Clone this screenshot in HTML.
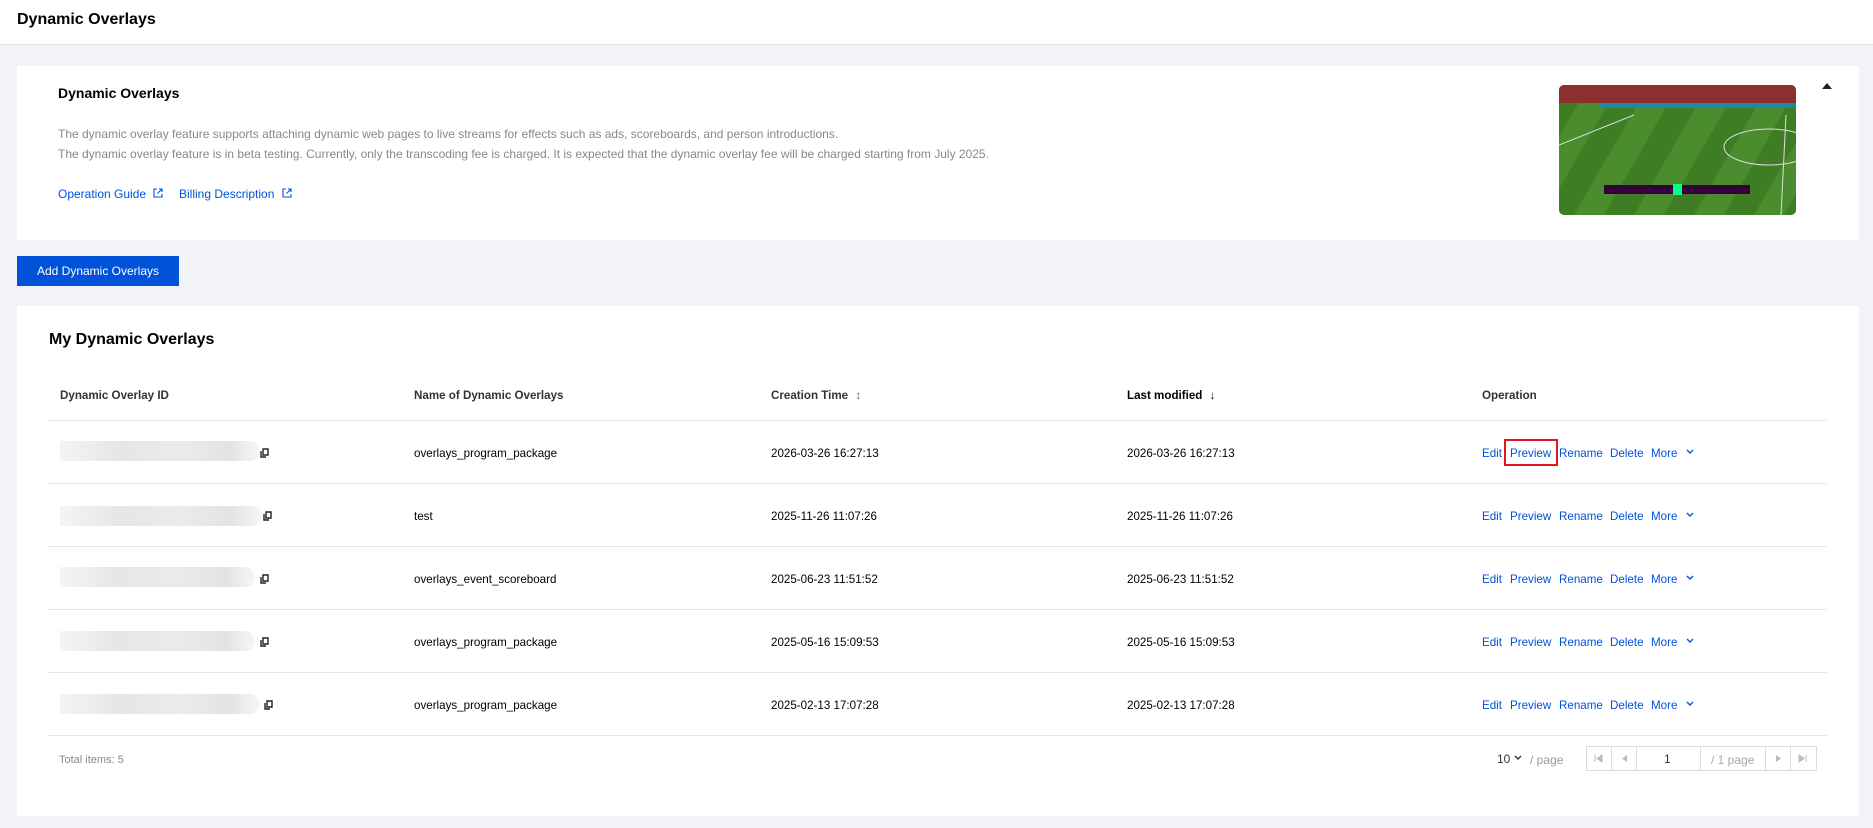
<!DOCTYPE html>
<html><head><meta charset="utf-8"><style>
*{margin:0;padding:0;box-sizing:border-box}
body{width:1873px;height:828px;background:#f2f3f7;font-family:"Liberation Sans",Arial,sans-serif;position:relative;overflow:hidden;color:#000}
.abs{position:absolute;white-space:nowrap}
.hdr{position:absolute;left:0;top:0;width:1873px;height:45px;background:#fff;border-bottom:1px solid #e5e6ea}
.card{position:absolute;background:#fff}
.t12{font-size:12px;line-height:14px}
.tb{font-size:11.6px;line-height:14px}
.gray{color:#888}
a{color:#0052d9}
.line{position:absolute;left:48px;width:1779px;height:1px;background:#e7e8ed}
.blur{position:absolute;height:20px;background:linear-gradient(90deg,#f4f4f4,#e6e6e6 30%,#ebebeb 60%,#e3e3e3 85%,#f6f6f6);border-radius:0 10px 10px 0}
</style></head><body>
<div class="hdr"><div class="abs" style="left:17px;top:11px;font-size:16px;font-weight:bold">Dynamic Overlays</div></div>

<div class="card" style="left:17px;top:66px;width:1842px;height:174px"></div>
<div class="abs" style="left:58px;top:85px;font-size:14px;font-weight:bold">Dynamic Overlays</div>
<div class="abs t12 gray" style="left:58px;top:127px">The dynamic overlay feature supports attaching dynamic web pages to live streams for effects such as ads, scoreboards, and person introductions.</div>
<div class="abs t12 gray" style="left:58px;top:147px">The dynamic overlay feature is in beta testing. Currently, only the transcoding fee is charged. It is expected that the dynamic overlay fee will be charged starting from July 2025.</div>
<div class="abs t12" style="left:58px;top:187px"><a>Operation Guide</a> <svg width="10" height="10" viewBox="0 0 10 10" style="margin-left:4px"><path d="M4 1H1v8h8V6M6 1h3v3M9 1L4.5 5.5" stroke="#0052d9" fill="none" stroke-width="1.1"/></svg></div>
<div class="abs t12" style="left:179px;top:187px"><a>Billing Description</a> <svg width="10" height="10" viewBox="0 0 10 10" style="margin-left:4px"><path d="M4 1H1v8h8V6M6 1h3v3M9 1L4.5 5.5" stroke="#0052d9" fill="none" stroke-width="1.1"/></svg></div>
<svg class="abs" style="left:1559px;top:85px" width="237" height="130" viewBox="0 0 237 130">
<defs><clipPath id="c"><rect width="237" height="130" rx="5"/></clipPath>
<pattern id="s" width="60" height="130" patternUnits="userSpaceOnUse" patternTransform="skewX(-30)"><rect width="30" height="130" fill="#3f7d25"/><rect x="30" width="30" height="130" fill="#4a8c2e"/></pattern></defs>
<g clip-path="url(#c)"><rect width="237" height="130" fill="url(#s)"/><rect width="237" height="18" fill="#8a3030"/><rect y="18" x="40" width="197" height="5" fill="#1b8ba3"/>
<path d="M0 60L75 30M227 30L222 130" stroke="#ddd" stroke-width="1" fill="none"/><ellipse cx="210" cy="62" rx="45" ry="18" stroke="#ddd" fill="none"/>
<rect x="45" y="100" width="146" height="9" fill="#37003c"/><rect x="114" y="99" width="9" height="11" fill="#00ff85"/></g></svg>
<svg class="abs" style="left:1822px;top:82px" width="10" height="8"><path d="M0 7L5 1L10 7Z" fill="#222"/></svg>

<div class="abs" style="left:17px;top:256px;width:162px;height:30px;background:#0052d9;color:#fff;font-size:12px;line-height:30px;text-align:center">Add Dynamic Overlays</div>

<div class="card" style="left:17px;top:306px;width:1842px;height:510px"></div>
<div class="abs" style="left:49px;top:331px;font-size:16px;font-weight:bold">My Dynamic Overlays</div>
<div class="abs tb" style="left:60px;top:389px;color:#333;font-weight:bold">Dynamic Overlay ID</div>
<div class="abs tb" style="left:414px;top:389px;color:#333;font-weight:bold">Name of Dynamic Overlays</div>
<div class="abs tb" style="left:771px;top:389px;color:#333;font-weight:bold">Creation Time <span style="margin-left:4px;color:#666">↕</span></div>
<div class="abs tb" style="left:1127px;top:389px;font-weight:bold">Last modified <span style="margin-left:4px">↓</span></div>
<div class="abs tb" style="left:1482px;top:389px;color:#333;font-weight:bold">Operation</div>
<div class="line" style="top:420px"></div><div class="line" style="top:483px"></div><div class="line" style="top:546px"></div><div class="line" style="top:609px"></div><div class="line" style="top:672px"></div><div class="line" style="top:735px"></div>

<div class="blur" style="left:60px;top:441px;width:200px"></div>
<div class="blur" style="left:60px;top:506px;width:202px"></div>
<div class="blur" style="left:60px;top:567px;width:195px"></div>
<div class="blur" style="left:60px;top:631px;width:195px"></div>
<div class="blur" style="left:60px;top:694px;width:200px"></div>
<svg class="abs" style="left:260px;top:448px" width="9" height="10"><path d="M1 3v6h5M3 1h5v6H3z" stroke="#222" fill="none" stroke-width="1.4"/></svg>
<svg class="abs" style="left:263px;top:511px" width="9" height="10"><path d="M1 3v6h5M3 1h5v6H3z" stroke="#222" fill="none" stroke-width="1.4"/></svg>
<svg class="abs" style="left:260px;top:574px" width="9" height="10"><path d="M1 3v6h5M3 1h5v6H3z" stroke="#222" fill="none" stroke-width="1.4"/></svg>
<svg class="abs" style="left:260px;top:637px" width="9" height="10"><path d="M1 3v6h5M3 1h5v6H3z" stroke="#222" fill="none" stroke-width="1.4"/></svg>
<svg class="abs" style="left:264px;top:700px" width="9" height="10"><path d="M1 3v6h5M3 1h5v6H3z" stroke="#222" fill="none" stroke-width="1.4"/></svg>

<div class="abs tb" style="left:414px;top:447px">overlays_program_package</div>
<div class="abs tb" style="left:414px;top:510px">test</div>
<div class="abs tb" style="left:414px;top:573px">overlays_event_scoreboard</div>
<div class="abs tb" style="left:414px;top:636px">overlays_program_package</div>
<div class="abs tb" style="left:414px;top:699px">overlays_program_package</div>

<div class="abs tb" style="left:771px;top:447px">2026-03-26 16:27:13</div><div class="abs tb" style="left:1127px;top:447px">2026-03-26 16:27:13</div>
<div class="abs tb" style="left:771px;top:510px">2025-11-26 11:07:26</div><div class="abs tb" style="left:1127px;top:510px">2025-11-26 11:07:26</div>
<div class="abs tb" style="left:771px;top:573px">2025-06-23 11:51:52</div><div class="abs tb" style="left:1127px;top:573px">2025-06-23 11:51:52</div>
<div class="abs tb" style="left:771px;top:636px">2025-05-16 15:09:53</div><div class="abs tb" style="left:1127px;top:636px">2025-05-16 15:09:53</div>
<div class="abs tb" style="left:771px;top:699px">2025-02-13 17:07:28</div><div class="abs tb" style="left:1127px;top:699px">2025-02-13 17:07:28</div>

<div class="abs tb" style="left:1482px;top:447px;color:#0052d9"><span style="position:absolute;left:0">Edit</span><span style="position:absolute;left:28px">Preview</span><span style="position:absolute;left:77px">Rename</span><span style="position:absolute;left:128px">Delete</span><span style="position:absolute;left:169px">More</span></div>
<div class="abs" style="left:1504px;top:439px;width:54px;height:27px;border:2px solid #e0161d"></div>
<div class="abs tb" style="left:1482px;top:510px;color:#0052d9"><span style="position:absolute;left:0">Edit</span><span style="position:absolute;left:28px">Preview</span><span style="position:absolute;left:77px">Rename</span><span style="position:absolute;left:128px">Delete</span><span style="position:absolute;left:169px">More</span></div>
<div class="abs tb" style="left:1482px;top:573px;color:#0052d9"><span style="position:absolute;left:0">Edit</span><span style="position:absolute;left:28px">Preview</span><span style="position:absolute;left:77px">Rename</span><span style="position:absolute;left:128px">Delete</span><span style="position:absolute;left:169px">More</span></div>
<div class="abs tb" style="left:1482px;top:636px;color:#0052d9"><span style="position:absolute;left:0">Edit</span><span style="position:absolute;left:28px">Preview</span><span style="position:absolute;left:77px">Rename</span><span style="position:absolute;left:128px">Delete</span><span style="position:absolute;left:169px">More</span></div>
<div class="abs tb" style="left:1482px;top:699px;color:#0052d9"><span style="position:absolute;left:0">Edit</span><span style="position:absolute;left:28px">Preview</span><span style="position:absolute;left:77px">Rename</span><span style="position:absolute;left:128px">Delete</span><span style="position:absolute;left:169px">More</span></div>
<svg class="abs" style="left:1686px;top:449px" width="8" height="6"><path d="M1 1l3 3 3-3" stroke="#0052d9" fill="none" stroke-width="1.4"/></svg>
<svg class="abs" style="left:1686px;top:512px" width="8" height="6"><path d="M1 1l3 3 3-3" stroke="#0052d9" fill="none" stroke-width="1.4"/></svg>
<svg class="abs" style="left:1686px;top:575px" width="8" height="6"><path d="M1 1l3 3 3-3" stroke="#0052d9" fill="none" stroke-width="1.4"/></svg>
<svg class="abs" style="left:1686px;top:638px" width="8" height="6"><path d="M1 1l3 3 3-3" stroke="#0052d9" fill="none" stroke-width="1.4"/></svg>
<svg class="abs" style="left:1686px;top:701px" width="8" height="6"><path d="M1 1l3 3 3-3" stroke="#0052d9" fill="none" stroke-width="1.4"/></svg>

<div class="abs t12" style="left:59px;top:753px;color:#888;font-size:11px">Total items: 5</div>
<div class="abs t12" style="left:1497px;top:752px;color:#333">10</div>
<svg class="abs" style="left:1514px;top:755px" width="8" height="6"><path d="M1 1l3 3 3-3" stroke="#333" fill="none" stroke-width="1.4"/></svg>
<div class="abs t12" style="left:1530px;top:753px;color:#999">/ page</div>
<div class="abs" style="left:1586px;top:746px;width:231px;height:25px;border:1px solid #dcdcdc"></div>
<div class="abs" style="left:1611px;top:747px;width:1px;height:23px;background:#dcdcdc"></div>
<div class="abs" style="left:1636px;top:747px;width:1px;height:23px;background:#dcdcdc"></div>
<div class="abs" style="left:1700px;top:747px;width:1px;height:23px;background:#dcdcdc"></div>
<div class="abs" style="left:1765px;top:747px;width:1px;height:23px;background:#dcdcdc"></div>
<div class="abs" style="left:1790px;top:747px;width:1px;height:23px;background:#dcdcdc"></div>
<svg class="abs" style="left:1594px;top:754px" width="9" height="9"><path d="M1 1v7M8 1L3 4.5 8 8z" stroke="#bbb" fill="#bbb"/></svg>
<svg class="abs" style="left:1620px;top:754px" width="9" height="9"><path d="M7 1L2 4.5 7 8z" fill="#bbb"/></svg>
<div class="abs t12" style="left:1664px;top:752px;color:#333">1</div>
<div class="abs t12" style="left:1711px;top:753px;color:#aaa">/ 1 page</div>
<svg class="abs" style="left:1774px;top:754px" width="9" height="9"><path d="M2 1l5 3.5L2 8z" fill="#bbb"/></svg>
<svg class="abs" style="left:1798px;top:754px" width="9" height="9"><path d="M8 1v7M1 1l5 3.5L1 8z" stroke="#bbb" fill="#bbb"/></svg>
</body></html>
